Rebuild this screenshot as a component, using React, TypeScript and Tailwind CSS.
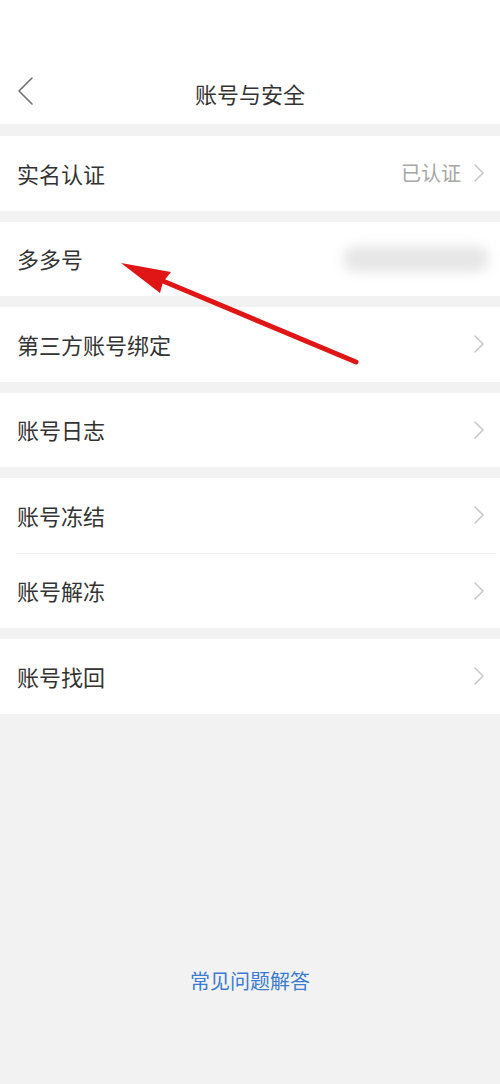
import React from "react";

const Chevron = () => (
  <svg width="12" height="20" viewBox="0 0 12 20" fill="none" className="shrink-0">
    <path d="M2 2l8 8-8 8" stroke="#c8c8c8" strokeWidth="1.6" strokeLinecap="round" strokeLinejoin="round" />
  </svg>
);

const Row = ({ label, right, children }: { label: string; right?: string; children?: React.ReactNode }) => (
  <div className="flex h-[74.5px] items-center justify-between bg-white pl-[17px] pr-[15px]">
    <span className="text-[22px] text-[#333]">{label}</span>
    <div className="flex items-center gap-[12px]">
      {right && <span className="text-[20px] text-[#a6a6a6]">{right}</span>}
      {children}
      {!children && <Chevron />}
    </div>
  </div>
);

export default function App() {
  return (
    <div
      className="relative flex min-h-[1084px] w-[500px] flex-col bg-[#f2f2f2]"
      style={{ fontFamily: '"Noto Sans CJK SC", "Noto Sans", sans-serif' }}
    >
      <header className="flex h-[124px] items-end bg-white pb-[9px]">
        <div className="relative flex h-[44px] w-full items-center justify-center">
          <svg width="20" height="30" viewBox="0 0 20 30" fill="none" className="absolute left-[16px] top-[5px]">
            <path d="M16 2L3 15l13 13" stroke="#707070" strokeWidth="1.6" strokeLinecap="round" strokeLinejoin="round" />
          </svg>
          <h1 className="text-[22px] text-[#333]">账号与安全</h1>
        </div>
      </header>

      <div className="mt-[12px] flex flex-col gap-[11px]">
        <Row label="实名认证" right="已认证" />
        <Row label="多多号">
          <div className="mr-[-4px] h-[26px] w-[146px] rounded-full bg-[#e6e6e6] blur-[6px]" />
        </Row>
        <Row label="第三方账号绑定" />
        <Row label="账号日志" />
        <div className="flex flex-col bg-white">
          <Row label="账号冻结" />
          <div className="ml-[16px] mr-[4px] h-px bg-[#f0f0f0]" />
          <Row label="账号解冻" />
        </div>
        <Row label="账号找回" />
      </div>

      <div className="mt-auto flex justify-center pb-[88px]">
        <span className="text-[20px] text-[#3b7bd4]">常见问题解答</span>
      </div>

      <svg className="pointer-events-none absolute left-0 top-0" width="500" height="400" viewBox="0 0 500 400">
        <line x1="163" y1="281" x2="356" y2="362" stroke="#e01616" strokeWidth="5" strokeLinecap="round" />
        <polygon points="121,263 171,272 163,282 160,293" fill="#e01616" />
      </svg>
    </div>
  );
}
